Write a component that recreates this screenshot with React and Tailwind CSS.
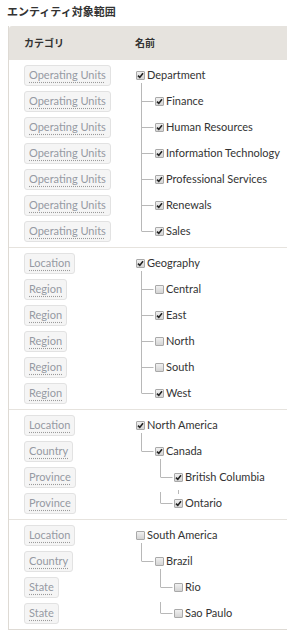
const font = { fontFamily: 'Lato, "Noto Sans CJK JP", sans-serif' };

// v: vertical connector [top, bottom] in row coords, stub: small line under a sibling
const groups = [
  [
    { cat: 'Operating Units', name: 'Department', depth: 0, checked: true },
    { cat: 'Operating Units', name: 'Finance', depth: 1, checked: true, v: [-5, 26] },
    { cat: 'Operating Units', name: 'Human Resources', depth: 1, checked: true, v: [0, 26] },
    { cat: 'Operating Units', name: 'Information Technology', depth: 1, checked: true, v: [0, 26] },
    { cat: 'Operating Units', name: 'Professional Services', depth: 1, checked: true, v: [0, 26] },
    { cat: 'Operating Units', name: 'Renewals', depth: 1, checked: true, v: [0, 26] },
    { cat: 'Operating Units', name: 'Sales', depth: 1, checked: true, v: [0, 13] },
  ],
  [
    { cat: 'Location', name: 'Geography', depth: 0, checked: true },
    { cat: 'Region', name: 'Central', depth: 1, checked: false, v: [-5, 26] },
    { cat: 'Region', name: 'East', depth: 1, checked: true, v: [0, 26] },
    { cat: 'Region', name: 'North', depth: 1, checked: false, v: [0, 26] },
    { cat: 'Region', name: 'South', depth: 1, checked: false, v: [0, 26] },
    { cat: 'Region', name: 'West', depth: 1, checked: true, v: [0, 13] },
  ],
  [
    { cat: 'Location', name: 'North America', depth: 0, checked: true },
    { cat: 'Country', name: 'Canada', depth: 1, checked: true, v: [-5, 13] },
    { cat: 'Province', name: 'British Columbia', depth: 2, checked: true, v: [-5, 13] },
    { cat: 'Province', name: 'Ontario', depth: 2, checked: true, v: [2, 13], stub: true },
  ],
  [
    { cat: 'Location', name: 'South America', depth: 0, checked: false },
    { cat: 'Country', name: 'Brazil', depth: 1, checked: false, v: [-5, 13] },
    { cat: 'State', name: 'Rio', depth: 2, checked: false, v: [-5, 13] },
    { cat: 'State', name: 'Sao Paulo', depth: 2, checked: false, v: [2, 13] },
  ],
];

const indent = ['ml-0', 'ml-[19px]', 'ml-[38px]'];

const Checkbox = ({ checked }) => (
  <span className="flex h-[9px] w-[9px] shrink-0 items-center justify-center rounded-[1px] border border-[#a9a9a9] bg-gradient-to-b from-[#f0f0f0] to-[#d4d4d4]">
    {checked && (
      <svg width="7" height="7" viewBox="0 0 7 7">
        <path d="M1 3.6 L2.8 5.4 L6 1.2" fill="none" stroke="#222" strokeWidth="1.6" />
      </svg>
    )}
  </span>
);

const Connector = ({ row }) => {
  if (!row.v) return null;
  const x = 5.5 + (row.depth - 1) * 19;
  const [top, bottom] = row.v;
  return (
    <svg className="pointer-events-none absolute left-0 top-0 overflow-visible" width="60" height="26">
      <line x1={x} y1={top} x2={x} y2={bottom} stroke="#b8b8b8" strokeWidth="1" />
      <line x1={x} y1="13.5" x2={x + 12} y2="13.5" stroke="#b8b8b8" strokeWidth="1" />
      {row.stub && <line x1="42.5" y1="0" x2="42.5" y2="4" stroke="#b8b8b8" strokeWidth="1" />}
    </svg>
  );
};

const Row = ({ row }) => (
  <div className="flex h-[26px] items-center">
    <div className="flex w-[111px] shrink-0 items-center pl-[15px]">
      <span className="flex h-[21px] items-center rounded-[3px] border border-[#e2e2e2] bg-[#f5f5f5] px-[4px] text-[11px] text-[#959aa3] underline decoration-[#9a9a9a] decoration-dotted underline-offset-[3px]">
        {row.cat}
      </span>
    </div>
    <div className="relative flex h-full flex-1 items-center pl-[16px]">
      <div className="relative h-full w-full">
        <Connector row={row} />
        <div className={`flex h-full items-center ${indent[row.depth]}`}>
          <Checkbox checked={row.checked} />
          <span className="ml-[2px] whitespace-nowrap text-[11px] text-[#333]">{row.name}</span>
        </div>
      </div>
    </div>
  </div>
);

export default function App() {
  return (
    <div className="min-h-[635px] w-[287px] overflow-hidden bg-white pt-[5px]" style={font}>
      <h2 className="ml-[7px] text-[11px] font-semibold leading-[14px] text-[#333]">エンティティ対象範囲</h2>
      <div className="ml-[8px] mt-[7px] border-b border-l border-[#dedad4]">
        <div className="flex h-[34px] items-center rounded-tl-[3px] bg-[#e6e3de] text-[10px] font-bold text-[#333]">
          <div className="w-[111px] shrink-0 pl-[15px]">カテゴリ</div>
          <div className="pl-[15px]">名前</div>
        </div>
        {groups.map((rows, gi) => (
          <div key={gi} className={`pb-[3px] pt-[2px] ${gi > 0 ? 'border-t border-[#e6e3de]' : ''}`}>
            {rows.map((row) => (
              <Row key={row.name} row={row} />
            ))}
          </div>
        ))}
      </div>
    </div>
  );
}
